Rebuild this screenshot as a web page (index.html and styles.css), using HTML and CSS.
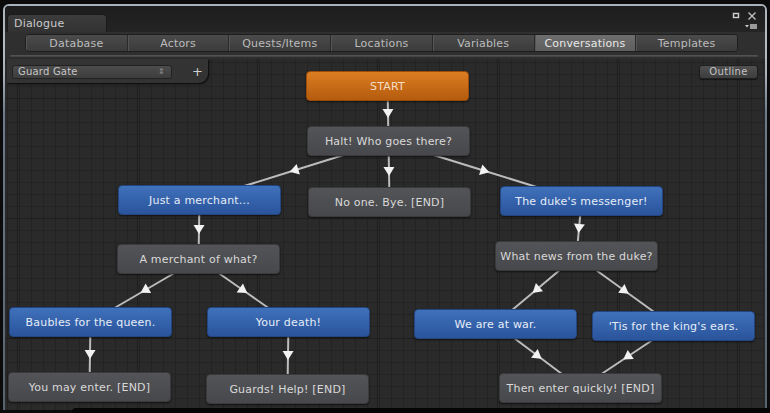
FILE: index.html
```html
<!DOCTYPE html>
<html>
<head>
<meta charset="utf-8">
<link rel="stylesheet" href="styles.css">
</head>
<body>
<div class="window">
  <div class="inner">
    <div class="titlebar">
      <div class="wintab">Dialogue</div>
      <svg class="winicons" width="26" height="22" viewBox="0 0 26 22">
        <rect x="1.5" y="3.5" width="5" height="4" fill="none" stroke="#d0d0d0" stroke-width="1.4"/>
        <path d="M16.5 2.5 L23.5 9.5 M23.5 2.5 L16.5 9.5" stroke="#bdbdbd" stroke-width="1.4"/>
        <path d="M13 15 L17 15 L15 17.5 Z" fill="#cfcfcf"/>
        <rect x="18" y="14" width="7" height="5" fill="#9a9a9a"/>
      </svg>
    </div>
    <div class="body">
      <div class="tabs">
        <div class="tab">Database</div>
        <div class="tab">Actors</div>
        <div class="tab">Quests/Items</div>
        <div class="tab">Locations</div>
        <div class="tab">Variables</div>
        <div class="tab active">Conversations</div>
        <div class="tab">Templates</div>
      </div>
      <div class="sep"></div>
      <div class="canvas">
        <svg class="wires" width="760" height="350" viewBox="0 0 760 350">
          <defs>
            <marker id="ah" markerUnits="userSpaceOnUse" markerWidth="12" markerHeight="12" viewBox="-6 -6 12 12" refX="0" refY="0" orient="auto">
              <path d="M-4.5,-5.5 L4.5,0 L-4.5,5.5 Z" fill="#f2f2f2"/>
            </marker>
          </defs>
          <g stroke="#bcbcbc" stroke-width="2" fill="none" marker-mid="url(#ah)">
            <path d="M382.5 27 L383 54.5 L383.5 82"/>
            <path d="M383.5 82 L289 111.5 L194.5 141"/>
            <path d="M383.5 82 L384 112.5 L384.5 143"/>
            <path d="M383.5 82 L480 112 L576.5 142"/>
            <path d="M194.5 141 L194 170.5 L193.5 200"/>
            <path d="M576.5 142 L574 169.5 L571.5 197"/>
            <path d="M193.5 200 L139.5 231.5 L85.5 263"/>
            <path d="M193.5 200 L238.5 231.5 L283.5 263"/>
            <path d="M571.5 197 L531 231 L490.5 265"/>
            <path d="M571.5 197 L620 232 L668.5 267"/>
            <path d="M85.5 263 L85 295.5 L84.5 328"/>
            <path d="M283.5 263 L283 296.5 L282.5 330"/>
            <path d="M490.5 265 L533 297 L575.5 329"/>
            <path d="M668.5 267 L622 298 L575.5 329"/>
          </g>
        </svg>
        <div class="panel">
          <div class="dropdown"><span>Guard Gate</span><span class="updown">&#8661;</span></div>
          <span class="plus">+</span>
        </div>
        <div class="outline">Outline</div>

        <div class="node start" style="left:301px;top:12px">START</div>
        <div class="node gray" style="left:302px;top:67px">Halt! Who goes there?</div>
        <div class="node blue" style="left:113px;top:126px">Just a merchant...</div>
        <div class="node gray" style="left:303px;top:128px">No one. Bye. [END]</div>
        <div class="node blue" style="left:495px;top:127px">The duke's messenger!</div>
        <div class="node gray" style="left:112px;top:185px">A merchant of what?</div>
        <div class="node gray" style="left:490px;top:182px">What news from the duke?</div>
        <div class="node blue" style="left:4px;top:248px">Baubles for the queen.</div>
        <div class="node blue" style="left:202px;top:248px">Your death!</div>
        <div class="node blue" style="left:409px;top:250px">We are at war.</div>
        <div class="node blue" style="left:587px;top:252px">'Tis for the king's ears.</div>
        <div class="node gray" style="left:3px;top:313px">You may enter. [END]</div>
        <div class="node gray" style="left:201px;top:315px">Guards! Help! [END]</div>
        <div class="node gray" style="left:494px;top:314px">Then enter quickly! [END]</div>
      </div>
    </div>
  </div>
</div>
<div class="taskbar"></div>
</body>
</html>
```

FILE: styles.css
```css
html, body {
  margin: 0;
  padding: 0;
}
body {
  width: 770px;
  height: 413px;
  overflow: hidden;
  background: #0b0b0b;
  position: relative;
  font-family: "DejaVu Sans", "Liberation Sans", sans-serif;
}
* { box-sizing: border-box; }

.window {
  margin: 4px 3px 0 3px;
  height: 406px;
  padding: 2px 2px 0 2px;
  border-radius: 6px 6px 0 0;
  background: linear-gradient(to bottom, #a9b1ba 0, #b6bcc3 40px, #aab1b9 70px, #6c7a89 110px, #56636f 100%);
}
.inner {
  height: 100%;
  display: flex;
  flex-direction: column;
  background: #222222;
  border-radius: 4px 4px 0 0;
  overflow: hidden;
}

.titlebar {
  height: 26px;
  display: flex;
  align-items: flex-start;
  padding: 8px 0 0 2px;
  background: linear-gradient(to bottom, #1d1d1d, #242424);
}
.wintab {
  width: 100px;
  height: 18px;
  border-radius: 4px 4px 0 0;
  background: linear-gradient(to bottom, #3c3c3c, #323232);
  border: 1px solid #1a1a1a;
  border-bottom: none;
  color: #c9c9c9;
  font-size: 11px;
  letter-spacing: 0.2px;
  padding: 2px 0 0 6px;
}
.winicons {
  margin: -4px 7px 0 auto;
  display: block;
}

.body {
  flex: 1;
  display: flex;
  flex-direction: column;
  background: #2f2f2f;
}
.tabs {
  margin: 2px 0 0 20px;
  width: 713px;
  height: 18px;
  display: flex;
  border-radius: 4px;
  border: 1px solid #1e1e1e;
  overflow: hidden;
  background: #3e3e3e;
}
.tab {
  flex: 1;
  text-align: center;
  font-size: 11px;
  letter-spacing: 0.2px;
  line-height: 17px;
  color: #bcbcbc;
  background: linear-gradient(to bottom, #4b4b4b, #3b3b3b);
  border-right: 1px solid #2a2a2a;
  box-shadow: inset 1px 0 0 #555;
}
.tab:last-child { border-right: none; }
.tab.active {
  background: linear-gradient(to bottom, #6e6e6e, #5e5e5e);
  color: #e8e8e8;
}
.sep {
  margin: 3px 0 0 5px;
  width: 748px;
  height: 3px;
  background: linear-gradient(to bottom, #585858, #424242 60%, #1c1c1c);
  border-radius: 1px;
}

.canvas {
  flex: 1;
  position: relative;
  background-color: #2a2a2a;
  background-image:
    linear-gradient(to bottom, #1f1f1f 1px, transparent 1px),
    linear-gradient(to right, #1f1f1f 1px, transparent 1px),
    linear-gradient(to bottom, #232323 1px, transparent 1px),
    linear-gradient(to right, #232323 1px, transparent 1px);
  background-size: 120px 120px, 120px 120px, 12px 12px, 12px 12px;
  background-position: 0 39px, 12px 0, 0 3px, 2px 0;
  margin-top: 1px;
}
.wires {
  position: absolute;
  left: 0;
  top: 0;
}

.panel {
  position: absolute;
  left: 2px;
  top: 0;
  width: 201px;
  height: 24px;
  background: #333333;
  border-radius: 0 0 9px 0;
  box-shadow: 1px 1px 2px rgba(0,0,0,0.8);
  display: flex;
  align-items: flex-start;
  padding: 6px 0 0 5px;
}
.dropdown {
  width: 160px;
  height: 14px;
  border-radius: 3px;
  border: 1px solid #222;
  background: linear-gradient(to bottom, #4c4c4c, #3d3d3d);
  color: #c6c6c6;
  font-size: 10px;
  letter-spacing: 0.2px;
  line-height: 12px;
  padding-left: 5px;
  display: flex;
  justify-content: space-between;
}
.updown {
  font-size: 8px;
  color: #9a9a9a;
  padding-right: 6px;
}
.plus {
  margin-left: 20px;
  color: #cfcfcf;
  font-size: 13px;
  line-height: 13px;
}
.outline {
  position: absolute;
  right: 7px;
  top: 6px;
  width: 59px;
  height: 14px;
  border-radius: 3px;
  border: 1px solid #1f1f1f;
  background: linear-gradient(to bottom, #505050, #3d3d3d);
  color: #c2c2c2;
  font-size: 10px;
  letter-spacing: 0.3px;
  line-height: 12px;
  text-align: center;
  box-shadow: 0 1px 1px rgba(0,0,0,0.5);
}

.node {
  position: absolute;
  width: 163px;
  height: 30px;
  border-radius: 4px;
  display: flex;
  align-items: center;
  justify-content: center;
  font-size: 11px;
  letter-spacing: 0.2px;
  white-space: nowrap;
  box-shadow: 0 1px 2px rgba(0,0,0,0.6);
}
.gray {
  background: linear-gradient(to bottom, #535457, #47484b);
  border: 1px solid #3a3a3c;
  color: #d9d9d9;
}
.blue {
  background: linear-gradient(to bottom, #3f71ba, #2a549c);
  border: 1px solid #234680;
  color: #e6edf8;
}
.start {
  background: linear-gradient(to bottom, #dc7d22, #b45b0e);
  border: 1px solid #9a4c0a;
  color: #f5dec6;
}

.taskbar {
  position: absolute;
  left: 72px;
  top: 408px;
  width: 698px;
  height: 5px;
  background: #050505;
  border-radius: 4px 0 0 0;
}
```
